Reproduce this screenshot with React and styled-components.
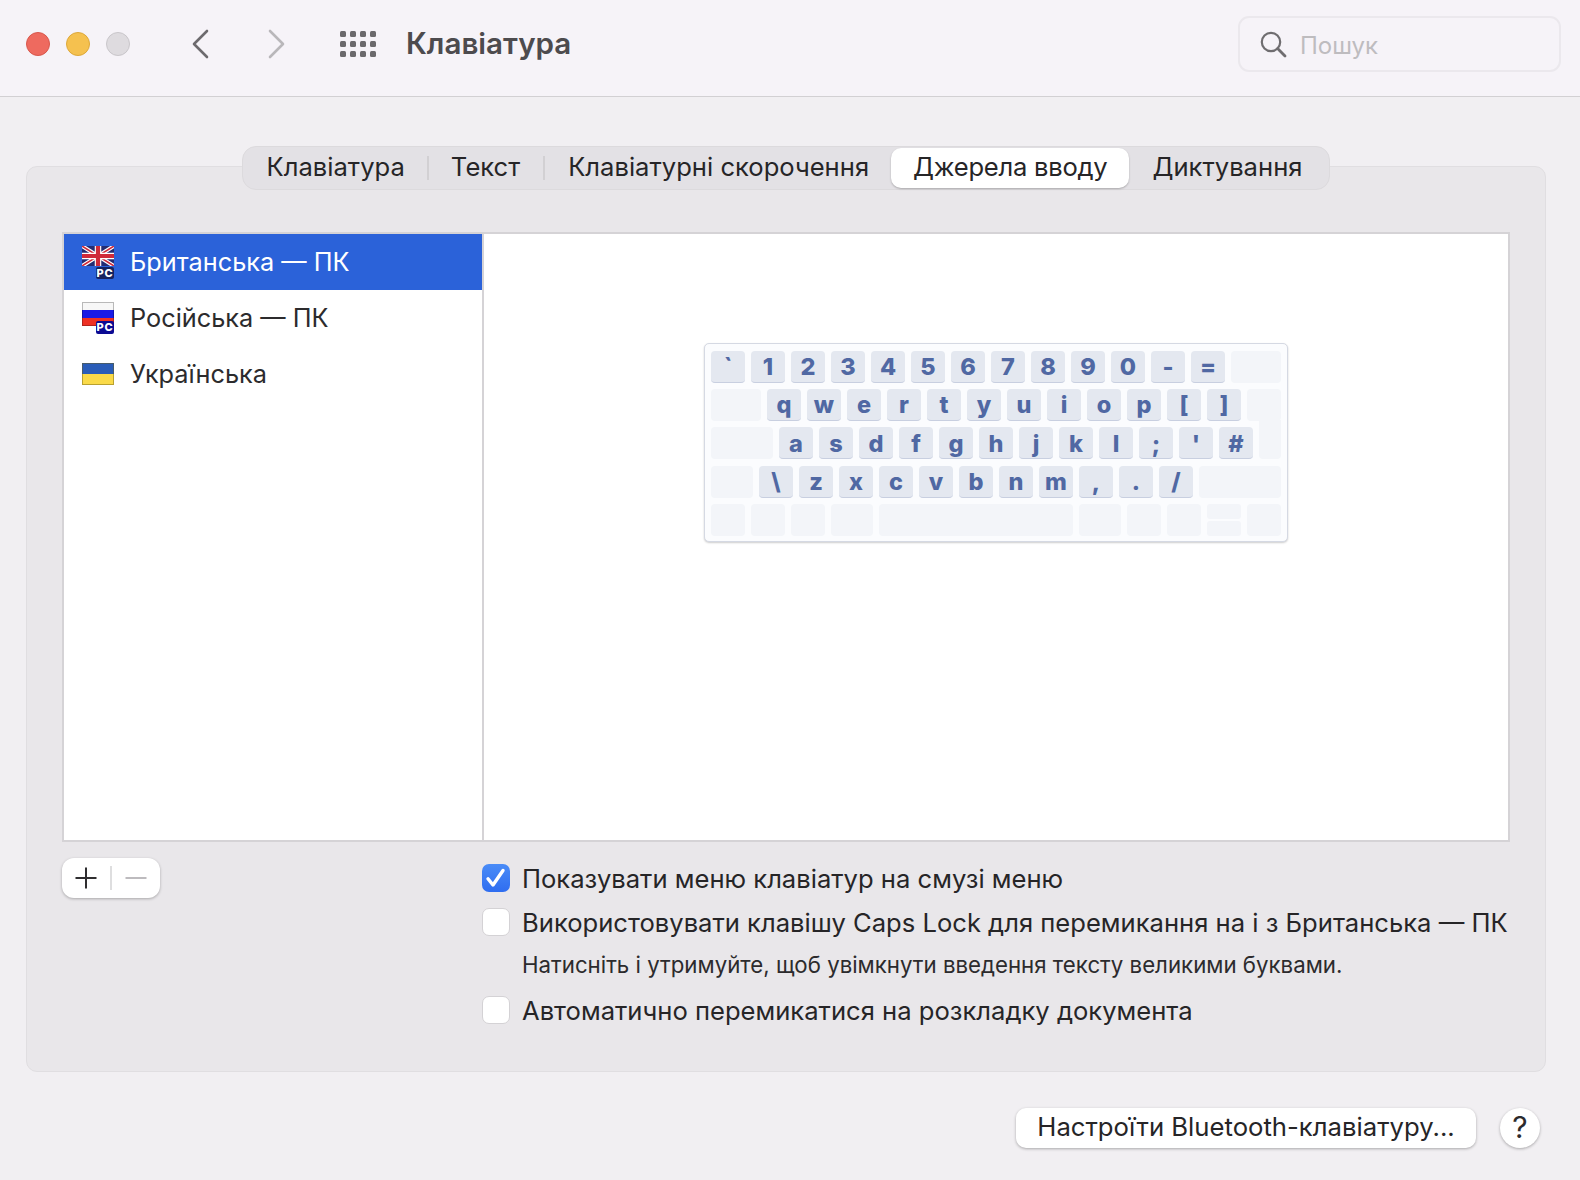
import React from "react";
import styled, { createGlobalStyle } from "styled-components";

const GlobalStyle = createGlobalStyle`
  html, body {
    margin: 0;
    padding: 0;
    background: #f1eff2;
  }
  body {
    width: 1580px;
    height: 1180px;
    overflow: hidden;
    font-family: Inter, "Noto Sans", "Liberation Sans", sans-serif;
    color: #262527;
  }
`;

const KEY_ROWS = {
  first: ["`", "1", "2", "3", "4", "5", "6", "7", "8", "9", "0", "-", "="],
  second: ["q", "w", "e", "r", "t", "y", "u", "i", "o", "p", "[", "]"],
  third: ["a", "s", "d", "f", "g", "h", "j", "k", "l", ";", "'", "#"],
  fourth: ["\\", "z", "x", "c", "v", "b", "n", "m", ",", ".", "/"],
};

const UkFlag = () => (
  <svg width="32" height="20" viewBox="0 0 32 20">
    <rect width="32" height="20" fill="#232c73" />
    <path d="M0 0L32 20M32 0L0 20" stroke="#fff" strokeWidth="4" />
    <path d="M0 0L32 20M32 0L0 20" stroke="#cf2a3a" strokeWidth="1.6" />
    <path d="M16 0V20M0 10H32" stroke="#fff" strokeWidth="6.5" />
    <path d="M16 0V20M0 10H32" stroke="#cf2a3a" strokeWidth="4.2" />
  </svg>
);

const RuFlag = () => (
  <svg width="32" height="24" viewBox="0 0 32 24">
    <rect width="32" height="8" fill="#f7f7f7" />
    <rect y="8" width="32" height="8" fill="#1a1ae6" />
    <rect y="16" width="32" height="8" fill="#ee3124" />
    <rect x="0.5" y="0.5" width="31" height="23" fill="none" stroke="#000" strokeOpacity="0.25" />
  </svg>
);

const UaFlag = () => (
  <svg width="32" height="22" viewBox="0 0 32 22">
    <rect width="32" height="11" fill="#2a5db8" />
    <rect y="11" width="32" height="11" fill="#fada49" />
    <rect x="0.5" y="0.5" width="31" height="21" fill="none" stroke="#6b5a10" strokeOpacity="0.45" />
  </svg>
);

const BackIcon = () => (
  <svg width="18" height="30" viewBox="0 0 18 30">
    <path d="M16 2L3 15L16 28" fill="none" stroke="#6d6a6e" strokeWidth="2.6" strokeLinecap="round" strokeLinejoin="round" />
  </svg>
);

const ForwardIcon = () => (
  <svg width="18" height="30" viewBox="0 0 18 30">
    <path d="M2 2L15 15L2 28" fill="none" stroke="#b9b7ba" strokeWidth="2.6" strokeLinecap="round" strokeLinejoin="round" />
  </svg>
);

const SearchIcon = () => (
  <svg width="27" height="27" viewBox="0 0 27 27">
    <circle cx="11" cy="11" r="9.2" fill="none" stroke="#6f6d70" strokeWidth="2.2" />
    <path d="M17.6 17.6L25 25" stroke="#6f6d70" strokeWidth="2.8" strokeLinecap="round" />
  </svg>
);

const CheckIcon = () => (
  <svg width="22" height="22" viewBox="0 0 22 22">
    <path d="M3 11.8L8 18L18 3.5" fill="none" stroke="#fff" strokeWidth="3.4" strokeLinecap="round" strokeLinejoin="round" />
  </svg>
);

export default function App() {
  return (
    <Page>
      <GlobalStyle />
      <Header>
        <Traffic>
          <Light $bg="#ee6a5f" $edge="#d8574c" />
          <Light $bg="#f5c14f" $edge="#dda83a" />
          <Light $bg="#dedbdf" $edge="#c9c6ca" />
        </Traffic>
        <NavButton $left={61}><BackIcon /></NavButton>
        <NavButton $left={59}><ForwardIcon /></NavButton>
        <AppGrid>
          {Array.from({ length: 12 }).map((_, i) => <AppDot key={i} />)}
        </AppGrid>
        <Title>Клавіатура</Title>
        <SearchBox>
          <SearchIcon />
          <SearchHint>Пошук</SearchHint>
        </SearchBox>
      </Header>

      <Panel>
        <Tabs>
          <Tab $pad="0 22px 0 0">Клавіатура</Tab>
          <TabLine />
          <Tab $pad="0 23px 0 22px">Текст</Tab>
          <TabLine />
          <Tab $pad="0 22px 0 23px">Клавіатурні скорочення</Tab>
          <ActiveTab>Джерела вводу</ActiveTab>
          <Tab $pad="0 0 0 23px">Диктування</Tab>
        </Tabs>

        <Table>
          <SourceList>
            <SourceRow $active>
              <FlagBox $lift={-10}>
                <UkFlag />
                <PcBadge $drop={13} $bg="#16235f">PC</PcBadge>
              </FlagBox>
              Британська — ПК
            </SourceRow>
            <SourceRow>
              <FlagBox $lift={-7}>
                <RuFlag />
                <PcBadge $drop={8} $bg="#0b0b93">PC</PcBadge>
              </FlagBox>
              Російська — ПК
            </SourceRow>
            <SourceRow>
              <FlagBox $lift={2}>
                <UaFlag />
              </FlagBox>
              Українська
            </SourceRow>
          </SourceList>
          <Preview>
            <Keyboard>
              <KeyRow>
                {KEY_ROWS.first.map((k) => <Key key={k}>{k}</Key>)}
                <BlankKey $w={50} />
              </KeyRow>
              <KeyRow>
                <BlankKey $w={50} />
                {KEY_ROWS.second.map((k) => <Key key={k}>{k}</Key>)}
                <BlankKey $w={34} />
              </KeyRow>
              <KeyRow>
                <BlankKey $w={62} />
                {KEY_ROWS.third.map((k) => <Key key={k}>{k}</Key>)}
                <EnterTail />
              </KeyRow>
              <KeyRow>
                <BlankKey $w={42} />
                {KEY_ROWS.fourth.map((k) => <Key key={k}>{k}</Key>)}
                <BlankKey $w={82} />
              </KeyRow>
              <KeyRow>
                <BlankKey $w={34} />
                <BlankKey $w={34} />
                <BlankKey $w={34} />
                <BlankKey $w={42} />
                <BlankKey $w={194} />
                <BlankKey $w={42} />
                <BlankKey $w={34} />
                <BlankKey $w={34} />
                <ArrowPair>
                  <ArrowHalf />
                  <ArrowHalf />
                </ArrowPair>
                <BlankKey $w={34} />
              </KeyRow>
            </Keyboard>
          </Preview>
        </Table>

        <Controls>
          <AddRemove>
            <PlusMinus>
              <svg width="22" height="22" viewBox="0 0 22 22">
                <path d="M11 0.5V21.5M0.5 11H21.5" stroke="#2f2e30" strokeWidth="2" />
              </svg>
            </PlusMinus>
            <AddRemoveLine />
            <PlusMinus>
              <svg width="22" height="22" viewBox="0 0 22 22">
                <path d="M0.5 11H21.5" stroke="#bdbbbe" strokeWidth="2" />
              </svg>
            </PlusMinus>
          </AddRemove>
          <Options>
            <Option>
              <Checkbox $checked><CheckIcon /></Checkbox>
              Показувати меню клавіатур на смузі меню
            </Option>
            <Option>
              <Checkbox />
              Використовувати клавішу Caps Lock для перемикання на і з Британська — ПК
            </Option>
            <Note>Натисніть і утримуйте, щоб увімкнути введення тексту великими буквами.</Note>
            <Option>
              <Checkbox />
              Автоматично перемикатися на розкладку документа
            </Option>
          </Options>
        </Controls>
      </Panel>

      <Footer>
        <BluetoothButton>Настроїти Bluetooth-клавіатуру...</BluetoothButton>
        <HelpButton>?</HelpButton>
      </Footer>
    </Page>
  );
}

const Page = styled.div`
  width: 1580px;
  height: 1180px;
  display: flex;
  flex-direction: column;
`;

const Header = styled.header`
  height: 97px;
  box-sizing: border-box;
  flex-shrink: 0;
  display: flex;
  align-items: center;
  padding: 0 19px 8px 26px;
  background: #f6f3f8;
  border-bottom: 1.5px solid #d2d0d3;
`;

const Traffic = styled.div`
  display: flex;
  gap: 16px;
`;

const Light = styled.span`
  width: 24px;
  height: 24px;
  border-radius: 50%;
  box-sizing: border-box;
  background: ${(p) => p.$bg};
  border: 1px solid ${(p) => p.$edge};
`;

const NavButton = styled.div`
  display: flex;
  margin-left: ${(p) => p.$left}px;
`;

const AppGrid = styled.div`
  margin-left: 54px;
  display: grid;
  grid-template-columns: repeat(4, 6px);
  grid-auto-rows: 6px;
  gap: 4px;
`;

const AppDot = styled.span`
  background: #6b696c;
  border-radius: 1.5px;
`;

const Title = styled.h1`
  margin: 0 0 2px 30px;
  font-size: 29.6px;
  font-weight: 600;
  color: #4d4b4e;
`;

const SearchBox = styled.div`
  margin-left: auto;
  width: 323px;
  height: 56px;
  box-sizing: border-box;
  display: flex;
  align-items: center;
  gap: 13px;
  padding-left: 20px;
  border: 2px solid #ebe8ed;
  border-radius: 11px;
`;

const SearchHint = styled.span`
  padding-top: 2px;
  font-size: 24px;
  color: #bebcbf;
`;

const Panel = styled.main`
  width: 1520px;
  height: 906px;
  box-sizing: border-box;
  margin: 69px 0 0 26px;
  padding: 0 35px;
  display: flex;
  flex-direction: column;
  background: #e9e7ea;
  border: 1px solid #e0dee1;
  border-radius: 11px;
`;

const Tabs = styled.nav`
  align-self: center;
  height: 44px;
  margin-top: -21px;
  display: flex;
  align-items: center;
  padding: 0 27px 0 24px;
  box-sizing: border-box;
  background: #e3e1e5;
  border: 1px solid #dcdadd;
  border-radius: 14px;
`;

const Tab = styled.span`
  font-size: 25.6px;
  color: #262527;
  padding: ${(p) => p.$pad};
  margin-bottom: 3px;
`;

const ActiveTab = styled.span`
  font-size: 25.6px;
  color: #262527;
  padding: 0 22px 3px;
  height: 40px;
  box-sizing: border-box;
  display: flex;
  align-items: center;
  letter-spacing: -0.25px;
  background: #fff;
  border-radius: 10px;
  box-shadow: 0 1px 2px rgba(0, 0, 0, 0.25);
`;

const TabLine = styled.span`
  width: 2px;
  height: 24px;
  background: #d2d0d3;
`;

const Table = styled.section`
  height: 610px;
  margin-top: 42px;
  display: flex;
  background: #fff;
  border: 2px solid #d5d3d6;
  box-sizing: border-box;
`;

const SourceList = styled.ul`
  width: 418px;
  margin: 0;
  padding: 0;
  list-style: none;
  border-right: 2px solid #d5d3d6;
`;

const SourceRow = styled.li`
  height: 56px;
  box-sizing: border-box;
  display: flex;
  align-items: center;
  gap: 16px;
  padding: 0 0 2px 18px;
  font-size: 25.3px;
  color: ${(p) => (p.$active ? "#fff" : "#2c2b2d")};
  background: ${(p) => (p.$active ? "#2b62d9" : "transparent")};
`;

const FlagBox = styled.span`
  position: relative;
  display: flex;
  width: 32px;
  margin-top: ${(p) => p.$lift}px;
`;

const PcBadge = styled.span`
  position: absolute;
  right: 0;
  bottom: -${(p) => p.$drop}px;
  width: 18px;
  height: 12.5px;
  border-radius: 2px;
  background: ${(p) => p.$bg};
  color: #fff;
  font-size: 11px;
  font-weight: 800;
  letter-spacing: 0.8px;
  line-height: 12.5px;
  text-align: center;
`;

const Preview = styled.div`
  flex: 1;
  display: flex;
  justify-content: center;
  align-items: flex-start;
  padding-top: 109px;
`;

const Keyboard = styled.div`
  width: 584px;
  height: 199px;
  box-sizing: border-box;
  padding: 6.5px 6px 0;
  display: flex;
  flex-direction: column;
  gap: 6.4px;
  background: #fbfcfe;
  border: 1px solid #d5d9e3;
  border-radius: 5px;
  box-shadow: 0 1px 2px rgba(0, 0, 0, 0.2);
`;

const KeyRow = styled.div`
  display: flex;
  gap: 6px;
  height: 32px;
`;

const Key = styled.span`
  width: 34px;
  flex-shrink: 0;
  box-sizing: border-box;
  display: flex;
  align-items: center;
  justify-content: center;
  padding-top: 1px;
  background: #e4e8f0;
  border-bottom: 1.5px solid #c8cfe0;
  border-radius: 4px;
  font-size: 23.5px;
  font-weight: 800;
  color: #5068a3;
`;

const BlankKey = styled.span`
  width: ${(p) => p.$w}px;
  flex-shrink: 0;
  background: #f3f5f9;
  border-radius: 4px;
`;

const EnterTail = styled.span`
  width: 22px;
  height: 39px;
  margin-top: -7px;
  flex-shrink: 0;
  background: #f3f5f9;
  border-radius: 0 0 4px 4px;
`;

const ArrowPair = styled.span`
  width: 34px;
  display: flex;
  flex-direction: column;
  gap: 2px;
`;

const ArrowHalf = styled.span`
  flex: 1;
  background: #f3f5f9;
  border-radius: 3px;
`;

const Controls = styled.section`
  display: flex;
  margin-top: 16px;
`;

const AddRemove = styled.div`
  width: 98px;
  height: 40px;
  flex-shrink: 0;
  display: flex;
  align-items: center;
  justify-content: center;
  gap: 13px;
  background: #fff;
  border-radius: 12px;
  box-shadow: 0 1px 3px rgba(0, 0, 0, 0.28);
`;

const PlusMinus = styled.span`
  display: flex;
`;

const AddRemoveLine = styled.span`
  width: 1.5px;
  height: 24px;
  background: #dededf;
`;

const Options = styled.div`
  margin: -2px 0 0 322px;
  display: flex;
  flex-direction: column;
`;

const Option = styled.label`
  height: 44px;
  display: flex;
  align-items: center;
  gap: 12px;
  font-size: 25.6px;
  white-space: nowrap;
  color: #262527;
`;

const Checkbox = styled.span`
  width: 28px;
  height: 28px;
  flex-shrink: 0;
  box-sizing: border-box;
  display: flex;
  align-items: center;
  justify-content: center;
  border-radius: 7px;
  background: ${(p) => (p.$checked ? "linear-gradient(#4a8cf7, #2f6df0)" : "#fff")};
  border: ${(p) => (p.$checked ? "none" : "1px solid #d4d2d5")};
`;

const Note = styled.p`
  margin: 0;
  padding-left: 40px;
  height: 44px;
  line-height: 41px;
  font-size: 22.25px;
  white-space: nowrap;
  color: #2c2b2d;
`;

const Footer = styled.footer`
  display: flex;
  justify-content: flex-end;
  align-items: center;
  gap: 24px;
  margin-top: 36px;
  padding-right: 40px;
`;

const BluetoothButton = styled.button`
  width: 460px;
  height: 40px;
  padding: 0 0 3px;
  border: none;
  border-radius: 10px;
  background: #fff;
  box-shadow: 0 1px 3px rgba(0, 0, 0, 0.3);
  font-family: inherit;
  font-size: 25.7px;
  color: #262527;
`;

const HelpButton = styled.button`
  width: 40px;
  height: 40px;
  padding: 0 0 2px;
  border: none;
  border-radius: 50%;
  background: #fff;
  box-shadow: 0 1px 3px rgba(0, 0, 0, 0.3);
  font-family: inherit;
  font-size: 30px;
  font-weight: 400;
  color: #2c2b2d;
`;
